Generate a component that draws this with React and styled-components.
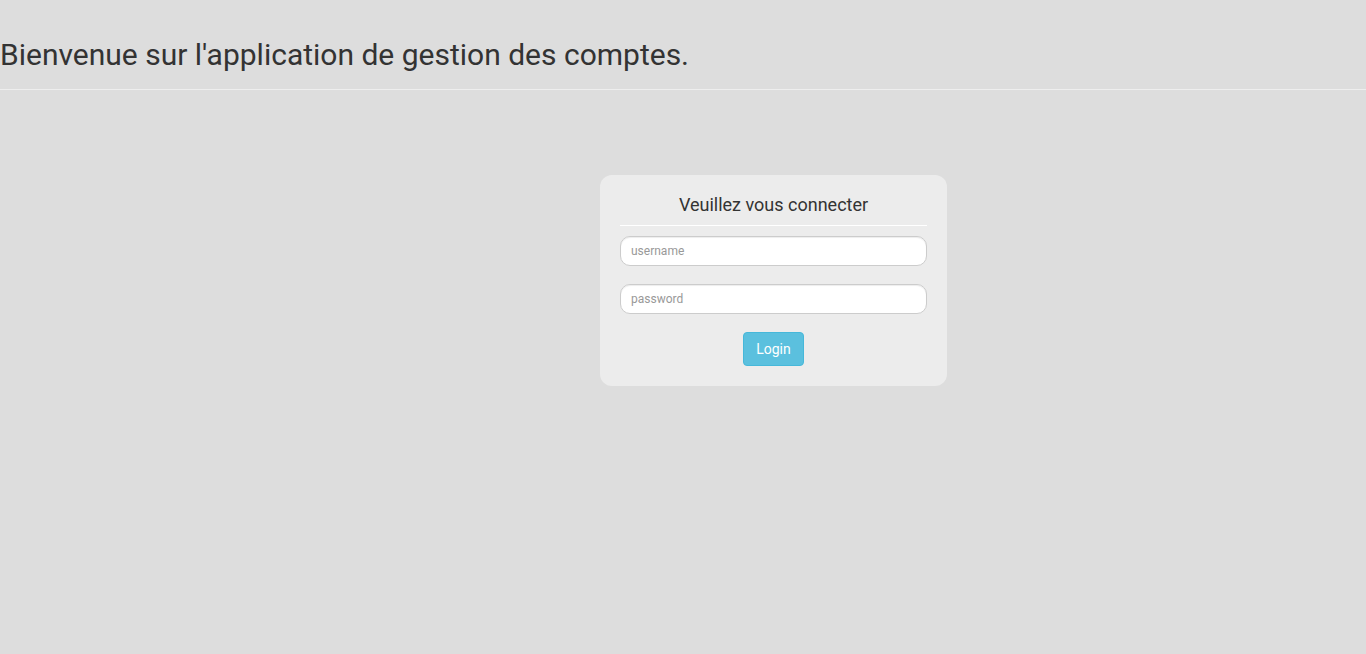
import React from "react";
import styled, { createGlobalStyle } from "styled-components";

const GlobalStyle = createGlobalStyle`
  html, body {
    margin: 0;
    padding: 0;
    background: #dddddd;
    font-family: Roboto, "Liberation Sans", sans-serif;
    color: #333333;
  }
  * { box-sizing: border-box; }
`;

const Page = styled.div`
  min-height: 654px;
  display: flex;
  flex-direction: column;
`;

const Header = styled.header`
  padding-top: 38px;
  border-bottom: 1px solid #eeeeee;
  padding-bottom: 18px;
`;

const Title = styled.h2`
  margin: 0;
  font-size: 30px;
  font-weight: 400;
  line-height: 33px;
  color: #333333;
`;

const Main = styled.main`
  display: flex;
  justify-content: center;
  padding-top: 85px;
  padding-left: 181px;
`;

const Card = styled.form`
  width: 347px;
  background: #ececec;
  border-radius: 12px;
  padding: 17px 20px 20px;
  display: flex;
  flex-direction: column;
`;

const CardTitle = styled.h4`
  margin: 0;
  font-size: 18px;
  font-weight: 400;
  line-height: 26px;
  text-align: center;
  color: #333333;
  padding-bottom: 7px;
  border-bottom: 1px solid #ffffff;
`;

const Field = styled.input`
  height: 30px;
  width: 100%;
  margin-top: ${(p) => p.$gap}px;
  padding: 5px 10px;
  font-family: Roboto, "Liberation Sans", sans-serif;
  font-size: 12px;
  color: #555555;
  background: #ffffff;
  border: 1px solid #cccccc;
  border-radius: 10px;
  box-shadow: inset 0 1px 1px rgba(0, 0, 0, 0.075);
  outline: none;
  &::placeholder { color: #999999; }
`;

const Actions = styled.div`
  display: flex;
  justify-content: center;
  margin-top: 18px;
`;

const Button = styled.button`
  height: 34px;
  padding: 6px 12px;
  font-family: Roboto, "Liberation Sans", sans-serif;
  font-size: 14px;
  color: #ffffff;
  background: #5bc0de;
  border: 1px solid #46b8da;
  border-radius: 4px;
  cursor: pointer;
`;

export default function App() {
  return (
    <Page>
      <GlobalStyle />
      <Header>
        <Title>Bienvenue sur l'application de gestion des comptes.</Title>
      </Header>
      <Main>
        <Card onSubmit={(e) => e.preventDefault()}>
          <CardTitle>Veuillez vous connecter</CardTitle>
          <Field $gap={10} type="text" placeholder="username" />
          <Field $gap={18} type="password" placeholder="password" />
          <Actions>
            <Button type="submit">Login</Button>
          </Actions>
        </Card>
      </Main>
    </Page>
  );
}
